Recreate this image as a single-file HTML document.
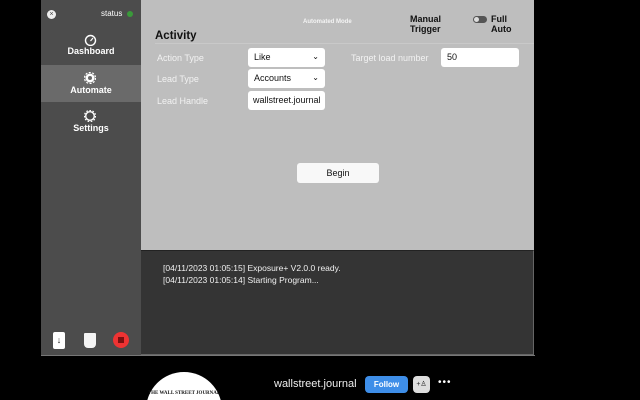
<!DOCTYPE html>
<html style="width:640px;height:400px;overflow:hidden"><head><style>
*{margin:0;padding:0;box-sizing:border-box}
body{width:640px;height:400px;background:#000;font-family:"Liberation Sans",sans-serif;position:relative;overflow:hidden}
.a{position:absolute}
.side{left:41px;top:0;width:100px;height:355px;background:#4c4c4c}
.main{left:141px;top:0;width:393px;height:250px;background:#bebebe}
.con{left:141px;top:250px;width:393px;height:105px;background:#343434;border-top:1px solid #222;border-right:1px solid #666;border-bottom:1px solid #666}
.lab{color:#f2f2f2;font-size:9px}
.inp{background:#fff;border-radius:3px;font-size:9px;color:#111;padding-left:6px;line-height:18px;height:19px}
.nav{color:#fff;font-size:9px;font-weight:bold;text-align:center;width:100px;left:41px}
</style></head><body>
<div class="a side"></div>
<div class="a" style="left:41px;top:65px;width:100px;height:37px;background:#6a6a6a"></div>
<div class="a" style="left:47px;top:10px;width:9px;height:9px;border-radius:50%;background:#eee;font-size:7px;line-height:9px;text-align:center;color:#444">×</div>
<div class="a" style="left:101px;top:9px;font-size:8px;color:#fff">status</div>
<div class="a" style="left:127px;top:11px;width:6px;height:6px;border-radius:50%;background:#3a9a3a"></div>
<svg class="a" style="left:84px;top:34px" width="13" height="12" viewBox="0 0 13 12"><circle cx="6.5" cy="6.5" r="5" fill="none" stroke="#fff" stroke-width="1.4"/><path d="M6.5 7 L9 4" stroke="#fff" stroke-width="1.2"/></svg>
<div class="a nav" style="top:46px">Dashboard</div>
<svg class="a" style="left:84px;top:72px" width="12" height="12" viewBox="0 0 12 12"><circle cx="6" cy="6" r="4.5" fill="#fff"/><circle cx="6" cy="6" r="5.5" fill="none" stroke="#fff" stroke-width="1.2" stroke-dasharray="2 1.5"/><circle cx="6" cy="6" r="2" fill="#6a6a6a"/></svg>
<div class="a nav" style="top:85px">Automate</div>
<svg class="a" style="left:84px;top:110px" width="12" height="12" viewBox="0 0 12 12"><circle cx="6" cy="6" r="4.3" fill="none" stroke="#fff" stroke-width="1.4"/><circle cx="6" cy="6" r="5.6" fill="none" stroke="#fff" stroke-width="1.2" stroke-dasharray="1.6 1.6"/></svg>
<div class="a nav" style="top:123px">Settings</div>
<div class="a" style="left:53px;top:332px;width:12px;height:17px;background:#fff;border-radius:2px;font-size:9px;text-align:center;line-height:17px;color:#222">↓</div>
<div class="a" style="left:84px;top:333px;width:12px;height:15px;background:#f4f4f4;border-radius:1px 1px 4px 4px"></div>
<div class="a" style="left:113px;top:332px;width:16px;height:16px;border-radius:50%;background:#e33"></div>
<div class="a" style="left:118px;top:337px;width:6px;height:6px;background:#7a1010"></div>
<div class="a main"></div>
<div class="a" style="left:303px;top:19px;font-size:6px;color:#f4f4f4;font-weight:bold">Automated Mode</div>
<div class="a" style="left:410px;top:14px;font-size:9px;color:#111;font-weight:bold;line-height:10px">Manual<br>Trigger</div>
<div class="a" style="left:473px;top:16px;width:14px;height:7px;border-radius:4px;background:#555"></div>
<div class="a" style="left:474px;top:17px;width:5px;height:5px;border-radius:50%;background:#ddd"></div>
<div class="a" style="left:491px;top:14px;font-size:9px;color:#111;font-weight:bold;line-height:10px">Full<br>Auto</div>
<div class="a" style="left:155px;top:30px;font-size:11.5px;font-weight:bold;color:#111">Activity</div>
<div class="a" style="left:155px;top:43px;width:379px;height:1px;background:#c9c9c9"></div>
<div class="a lab" style="left:157px;top:53px">Action Type</div>
<div class="a lab" style="left:157px;top:74px">Lead Type</div>
<div class="a lab" style="left:157px;top:96px">Lead Handle</div>
<div class="a inp" style="left:248px;top:48px;width:77px">Like<span style="position:absolute;right:6px;font-size:8px">⌄</span></div>
<div class="a inp" style="left:248px;top:69px;width:77px">Accounts<span style="position:absolute;right:6px;font-size:8px">⌄</span></div>
<div class="a inp" style="left:248px;top:91px;width:77px;padding-left:5px">wallstreet.journal</div>
<div class="a lab" style="left:351px;top:53px">Target load number</div>
<div class="a inp" style="left:441px;top:48px;width:78px">50</div>
<div class="a" style="left:297px;top:163px;width:82px;height:20px;background:#f8f8f8;border-radius:3px;font-size:9px;text-align:center;line-height:20px;color:#111">Begin</div>
<div class="a con"></div>
<div class="a" style="left:163px;top:262px;font-size:8.5px;color:#f0f0f0;line-height:12px">[04/11/2023 01:05:15] Exposure+ V2.0.0 ready.<br>[04/11/2023 01:05:14] Starting Program...</div>
<div class="a" style="left:41px;top:355px;width:494px;height:1px;background:#777"></div>
<div class="a" style="left:146px;top:372px;width:76px;height:28px;overflow:hidden"><div style="width:76px;height:76px;border-radius:50%;background:#fff;padding-top:19px;text-align:center;font-family:'Liberation Serif',serif;font-size:5px;color:#111;font-weight:bold;white-space:nowrap">THE WALL STREET JOURNAL</div></div>
<div class="a" style="left:274px;top:378px;font-size:11px;color:#eee">wallstreet.journal</div>
<div class="a" style="left:365px;top:376px;width:43px;height:17px;border-radius:4px;background:#3e8ee8;color:#fff;font-size:8px;font-weight:bold;text-align:center;line-height:17px">Follow</div>
<div class="a" style="left:413px;top:376px;width:17px;height:17px;border-radius:4px;background:#ddd;color:#222;font-size:7px;text-align:center;line-height:17px">+♙</div>
<div class="a" style="left:438px;top:377px;font-size:10px;color:#fff;letter-spacing:1px">•••</div>
</body></html>
